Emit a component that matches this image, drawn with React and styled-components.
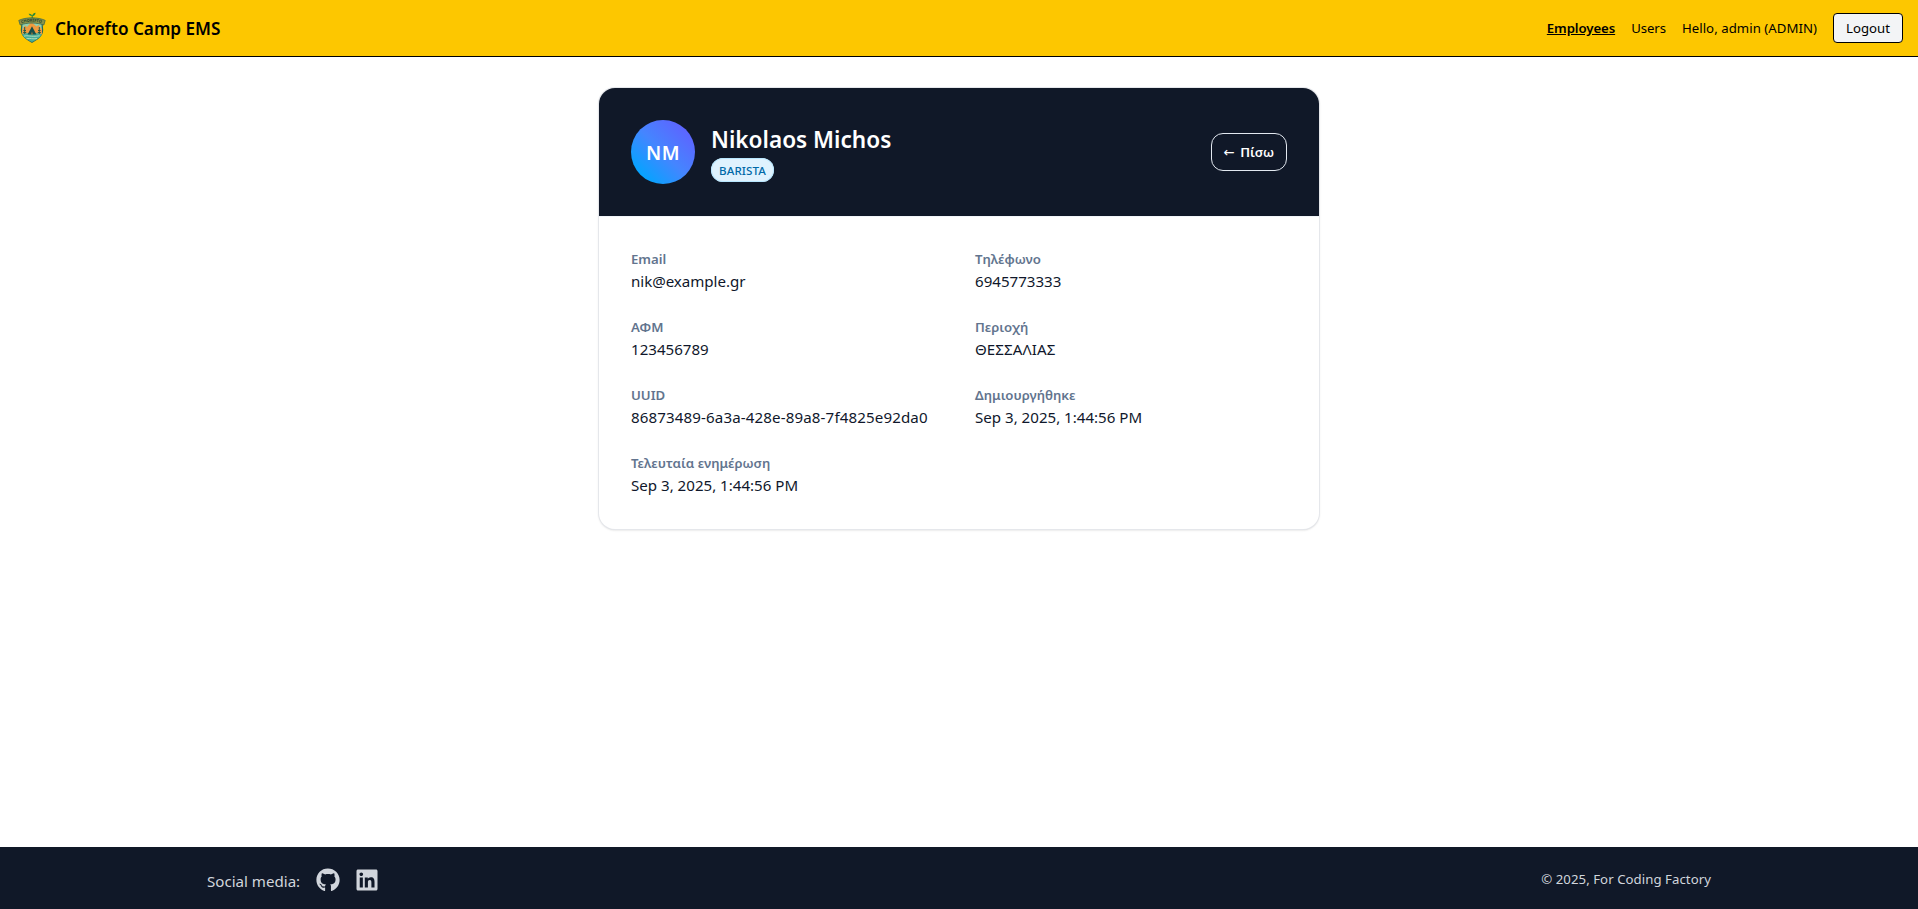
import React from "react";
import styled, { createGlobalStyle } from "styled-components";
import { FaGithub, FaLinkedin } from "react-icons/fa";

const GlobalStyle = createGlobalStyle`
  *, *::before, *::after { box-sizing: border-box; }
  body {
    margin: 0;
    background: #fff;
    color: #0f172b;
    font-family: "Segoe UI", "Noto Sans", "Open Sans", sans-serif;
  }
`;

const Page = styled.div`
  display: flex;
  flex-direction: column;
  min-height: 100vh;
`;

const Navbar = styled.header`
  display: flex;
  align-items: center;
  justify-content: space-between;
  height: 57px;
  padding: 0 15px 0 16px;
  background: #fdc700;
  border-bottom: 1px solid #000;
  color: #000;
`;

const Brand = styled.div`
  display: flex;
  align-items: center;
  gap: 7px;
`;

const BrandName = styled.span`
  padding-top: 2px;
  font-size: 17.15px;
  font-weight: 600;
  line-height: 28px;
`;

const Nav = styled.nav`
  display: flex;
  align-items: center;
  gap: 16px;
  font-size: 13.2px;
  line-height: 20px;
`;

const NavLink = styled.a`
  color: #000;
  font-weight: ${(p) => (p.$active ? 600 : 400)};
  text-decoration: ${(p) => (p.$active ? "underline" : "none")};
  letter-spacing: -0.08px;
`;

const Greeting = styled.span`
  letter-spacing: 0.05px;
`;

const LogoutButton = styled.button`
  height: 30px;
  padding: 0 12px;
  border: 1px solid #000;
  border-radius: 4px;
  background: #f3f4f6;
  color: #000;
  font: inherit;
`;

const Main = styled.main`
  flex: 1;
  display: flex;
  justify-content: center;
  align-items: flex-start;
  padding-top: 31px;
`;

const Card = styled.section`
  width: 720px;
  overflow: hidden;
  border-radius: 16px;
  background: #fff;
  box-shadow: 0 0 0 1px #e5e7eb, 0 1px 3px rgba(0, 0, 0, 0.1), 0 1px 2px rgba(0, 0, 0, 0.1);
`;

const CardHeader = styled.div`
  display: flex;
  align-items: center;
  gap: 16px;
  height: 128px;
  padding: 32px;
  background: #101828;
`;

const Avatar = styled.div`
  display: grid;
  place-items: center;
  width: 64px;
  height: 64px;
  padding-top: 1px;
  border-radius: 50%;
  background: linear-gradient(to top right, #00a6ff 12%, #4585ff 50%, #615fff 92%);
  color: #fff;
  font-size: 19.2px;
  font-weight: 600;
  letter-spacing: 0.4px;
`;

const Identity = styled.div`
  display: flex;
  flex-direction: column;
  align-items: flex-start;
  flex: 1;
  gap: 2px;
  padding-top: 1px;
`;

const Name = styled.h1`
  margin: 0;
  color: #fff;
  font-size: 22.6px;
  font-weight: 600;
  line-height: 32px;
`;

const RoleBadge = styled.span`
  height: 24px;
  padding: 0 8px;
  border-radius: 12px;
  background: #dff2fe;
  box-shadow: inset 0 0 0 1px #b8e6fe;
  color: #0069a8;
  font-size: 11.6px;
  font-weight: 500;
  letter-spacing: 0.1px;
  line-height: 25px;
`;

const BackButton = styled.button`
  height: 38px;
  padding: 0 12px;
  border: 1px solid #e2e8f0;
  border-radius: 12px;
  background: transparent;
  color: #fff;
  font: 600 13.2px/20px "Segoe UI", "Noto Sans", sans-serif;
`;

const Arrow = styled.span`
  display: inline-block;
  width: 13px;
  font-family: "DejaVu Sans", sans-serif;
  font-weight: 400;
  text-align: left;
`;

const Details = styled.dl`
  display: grid;
  grid-template-columns: 1fr 1fr;
  gap: 24px 32px;
  margin: 0;
  padding: 32px;
  border-top: 1px solid #f1f5f9;
`;

const Label = styled.dt`
  color: #62748e;
  font-size: 13.2px;
  font-weight: 600;
  line-height: 20px;
`;

const Value = styled.dd`
  margin: 0;
  color: #0f172b;
  font-size: 15.1px;
  line-height: 24px;
  letter-spacing: ${(p) => p.$tracking || 0}px;
`;

const Footer = styled.footer`
  height: 62px;
  background: #101828;
  color: #d1d5dc;
`;

const FooterInner = styled.div`
  display: flex;
  align-items: center;
  justify-content: space-between;
  max-width: 1536px;
  height: 100%;
  margin: 0 auto;
  padding: 0 16px;
`;

const Social = styled.div`
  display: flex;
  align-items: center;
  gap: 15.5px;
  padding-top: 5px;
  font-size: 15.1px;
  line-height: 24px;

  svg {
    display: block;
    height: 24px;
    width: auto;
    margin-top: -2px;
  }
`;

const Copyright = styled.p`
  margin: 0;
  padding-top: 2px;
  font-size: 13.2px;
  line-height: 20px;
  letter-spacing: 0.06px;
`;

function CampLogo() {
  return (
    <svg width="32" height="32" viewBox="0 0 32 32" aria-label="Chorefto Camp">
      <path d="M5.4 10.5 4.8 18c0 6.500 5.800 9.600 11.200 13.100C21.400 27.600 27.200 24.500 27.200 18l-.6-7.500Z" fill="#2a6657" />
      <path d="M6.500 11h19l.5 10H6Z" fill="#8fcfb0" />
      <path d="M6.200 17.500 9 13.500l2 1.500 4.500-5 5 4.500 2-1.500 3.500 4.500v5H6.200Z" fill="#f09a3e" />
      <path d="M6.300 22c5-1.400 14-1.400 19.400 0-.8 3.500-5.300 5.700-9.700 8.100-4.400-2.400-8.900-4.600-9.700-8.100Z" fill="#48ad98" />
      <path d="M8 24.200c4-1.400 6 1.200 15.700-.4M10.500 26.700c4-.9 6 .8 10.500-.2" fill="none" stroke="#b7dfbd" strokeWidth=".9" />
      <path d="m16 14.200-4.400 8.300h8.800Z" fill="#174e49" />
      <path d="m16 19.500-.7 3h1.400Z" fill="#d6923c" />
      <path d="M8.700 15v7M7.400 18.500h2.600M7.200 20.500h3M23.300 15v7M22 18.500h2.600M21.800 20.500h3" stroke="#245a48" strokeWidth="1" />
      <path d="M2.800 8.400C10 5 22 5 29.200 8.400l-1.400 4.600C21 10.400 11 10.400 4.200 13Z" fill="#8c9348" stroke="#3c684e" strokeWidth=".8" />
      <path id="banner" d="M5.700 11.400C11 9 21 9 26.500 11.400" fill="none" />
      <text fontSize="4" fontWeight="700" fill="#203f32">
        <textPath href="#banner" textLength="20">CHOREFTO</textPath>
      </text>
      <path d="M16.200 6.200V3" stroke="#2c7a35" strokeWidth="1" />
      <path d="M16.200 4.200c.2-2.200 1.400-3.200 3.400-3.500-.2 2.200-1.400 3.400-3.400 3.500ZM16 4c-1.400.2-2.600-.6-3.400-2.200 1.800-.3 3.200.4 3.400 2.200Z" fill="#2f8a3a" />
    </svg>
  );
}

const fields = [
  { label: "Email", value: "nik@example.gr", tracking: -0.04 },
  { label: "Τηλέφωνο", value: "6945773333" },
  { label: "ΑΦΜ", value: "123456789" },
  { label: "Περιοχή", value: "ΘΕΣΣΑΛΙΑΣ", tracking: 0.08 },
  { label: "UUID", value: "86873489-6a3a-428e-89a8-7f4825e92da0", tracking: 0.13 },
  { label: "Δημιουργήθηκε", value: "Sep 3, 2025, 1:44:56 PM" },
  { label: "Τελευταία ενημέρωση", value: "Sep 3, 2025, 1:44:56 PM" },
];

export default function App() {
  return (
    <Page>
      <GlobalStyle />
      <Navbar>
        <Brand>
          <CampLogo />
          <BrandName>Chorefto Camp EMS</BrandName>
        </Brand>
        <Nav>
          <NavLink $active>Employees</NavLink>
          <NavLink>Users</NavLink>
          <Greeting>Hello, admin (ADMIN)</Greeting>
          <LogoutButton>Logout</LogoutButton>
        </Nav>
      </Navbar>
      <Main>
        <Card>
          <CardHeader>
            <Avatar>NM</Avatar>
            <Identity>
              <Name>Nikolaos Michos</Name>
              <RoleBadge>BARISTA</RoleBadge>
            </Identity>
            <BackButton><Arrow>←</Arrow> Πίσω</BackButton>
          </CardHeader>
          <Details>
            {fields.map((f) => (
              <div key={f.label}>
                <Label>{f.label}</Label>
                <Value $tracking={f.tracking}>{f.value}</Value>
              </div>
            ))}
          </Details>
        </Card>
      </Main>
      <Footer>
        <FooterInner>
          <Social>
            <span>Social media:</span>
            <FaGithub />
            <FaLinkedin />
          </Social>
          <Copyright>© 2025, For Coding Factory</Copyright>
        </FooterInner>
      </Footer>
    </Page>
  );
}
